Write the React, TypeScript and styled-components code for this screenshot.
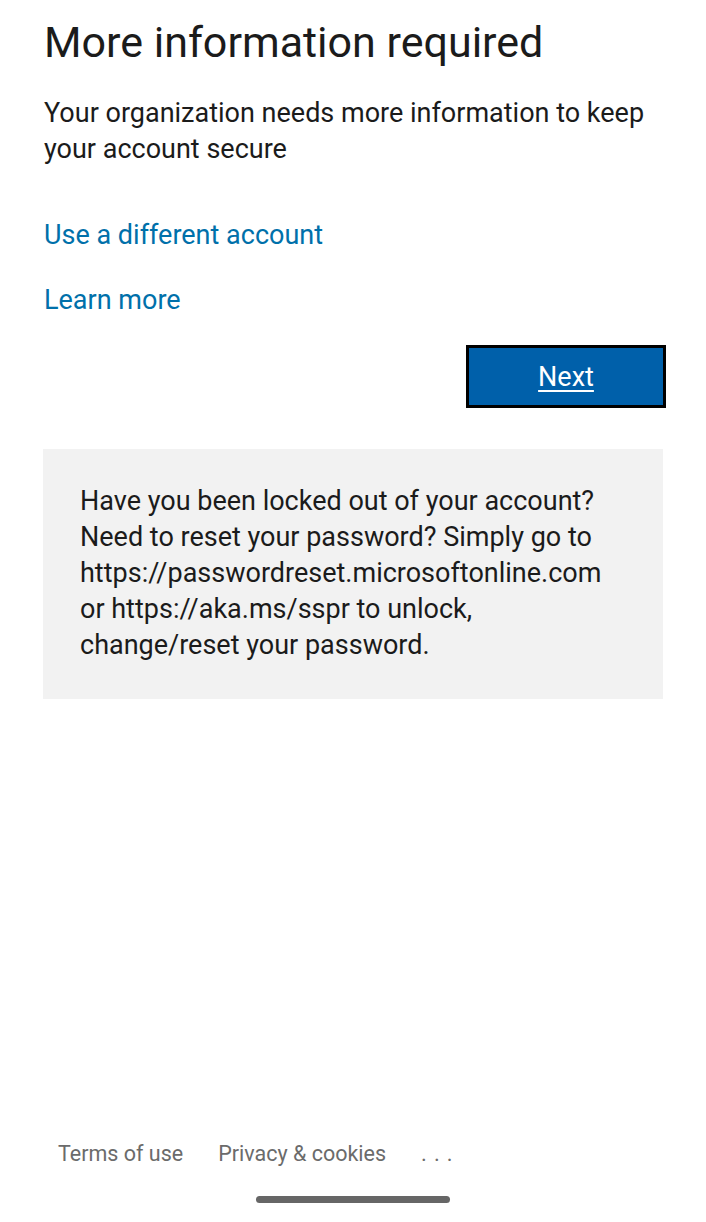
import React from "react";
import styled, { createGlobalStyle } from "styled-components";

const Global = createGlobalStyle`
  html, body { margin: 0; padding: 0; background: #fff; }
  body { font-family: Roboto, "Noto Sans", sans-serif; }
`;

const Page = styled.div`
  width: 706px;
  height: 1222px;
  display: flex;
  flex-direction: column;
  box-sizing: border-box;
  padding: 12px 43px 0 43px;
  overflow: hidden;
`;

const Title = styled.h1`
  margin: 0 0 0 1px;
  font-size: 43px;
  font-weight: 400;
  line-height: 60px;
  color: #1b1b1b;
`;

const Lead = styled.p`
  margin: 23px 0 0 1px;
  font-size: 27px;
  line-height: 36px;
  color: #1b1b1b;
`;

const LinkText = styled.a<{ $top: number }>`
  display: block;
  margin: ${(p) => p.$top}px 0 0 1px;
  font-size: 27px;
  line-height: 36px;
  color: #0070aa;
  text-decoration: none;
  width: max-content;
`;

const ButtonRow = styled.div`
  display: flex;
  justify-content: flex-end;
  margin-top: 27px;
  margin-right: -3px;
`;

const NextButton = styled.button`
  width: 200px;
  height: 63px;
  box-sizing: border-box;
  border: 3px solid #000;
  background: #0060aa;
  color: #fff;
  font-family: Roboto, sans-serif;
  font-size: 27px;
  text-decoration: underline;
  text-decoration-thickness: 2px;
  text-underline-offset: 4px;
  padding: 0;
`;

const InfoBox = styled.div`
  margin-top: 41px;
  width: 620px;
  box-sizing: border-box;
  background: #f2f2f2;
  padding: 34px 60px 36px 37px;
  font-size: 27px;
  line-height: 36px;
  color: #1b1b1b;
`;

const Footer = styled.div`
  display: flex;
  align-items: center;
  gap: 35px;
  padding-left: 15px;
  margin-bottom: 30px;
  font-size: 21.5px;
  color: #6b6b6b;
`;

const Dots = styled.span`
  letter-spacing: 7px;
  font-size: 22px;
`;

const HomeBar = styled.div`
  align-self: center;
  width: 194px;
  height: 7px;
  border-radius: 4px;
  background: #666;
  margin-bottom: 19px;
  margin-right: 1px;
`;

const Bottom = styled.div`
  display: flex;
  flex-direction: column;
  margin-top: auto;
`;

export default function App() {
  return (
    <>
      <Global />
      <Page>
        <Title>More information required</Title>
        <Lead>
          Your organization needs more information to keep your account secure
        </Lead>
        <LinkText href="#" $top={50}>Use a different account</LinkText>
        <LinkText href="#" $top={29}>Learn more</LinkText>
        <ButtonRow>
          <NextButton>Next</NextButton>
        </ButtonRow>
        <InfoBox>
          Have you been locked out of your account? Need to reset your password?
          Simply go to https://passwordreset.microsoftonline.com or
          https://aka.ms/sspr to unlock, change/reset your password.
        </InfoBox>
        <Bottom>
          <Footer>
            <span>Terms of use</span>
            <span>Privacy &amp; cookies</span>
            <Dots>...</Dots>
          </Footer>
          <HomeBar />
        </Bottom>
      </Page>
    </>
  );
}
